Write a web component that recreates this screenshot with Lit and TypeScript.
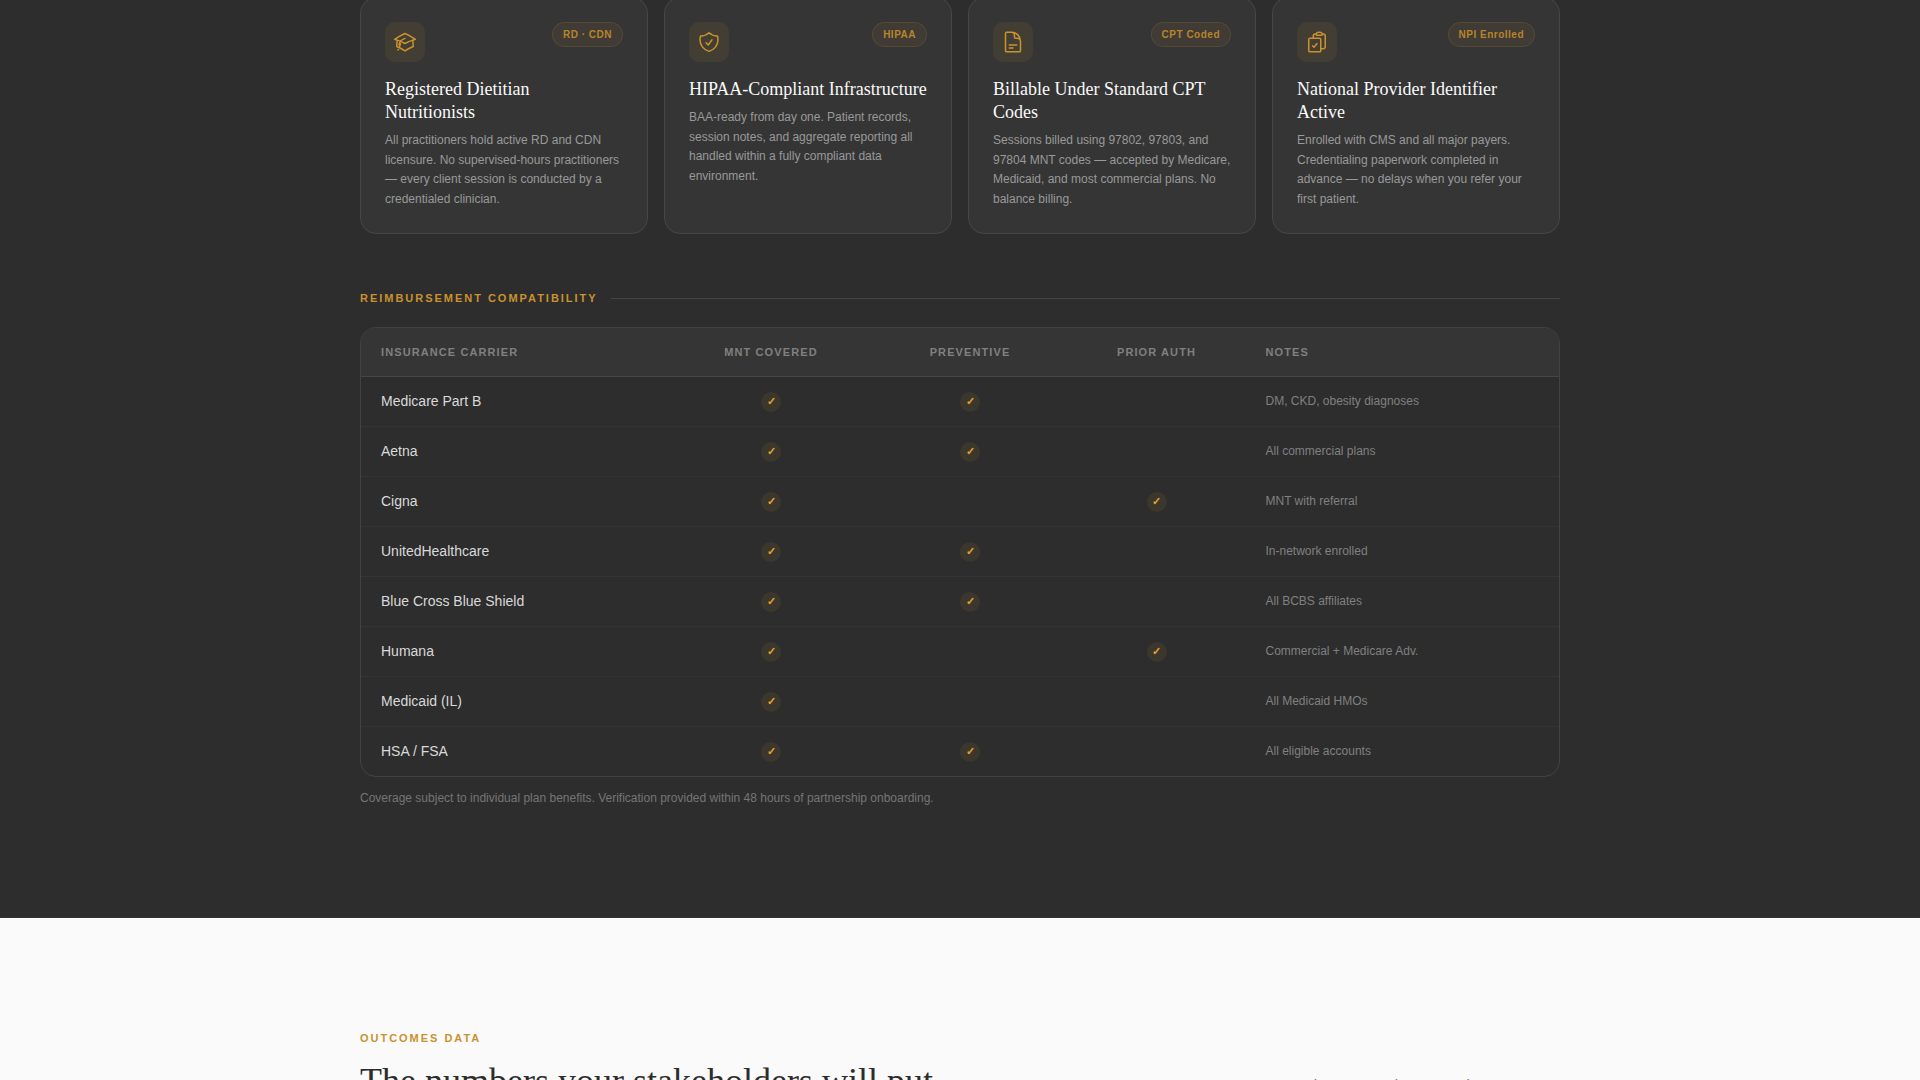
import { LitElement, html, css, svg } from "lit";
import { customElement } from "lit/decorators.js";

const icons: Record<string, unknown> = {
  cap: svg`<path d="M4.26 10.147a60.438 60.438 0 0 0-.491 6.347A48.62 48.62 0 0 1 12 20.904a48.62 48.62 0 0 1 8.232-4.41 60.46 60.46 0 0 0-.491-6.347m-15.482 0a50.636 50.636 0 0 0-2.658-.813A59.906 59.906 0 0 1 12 3.493a59.903 59.903 0 0 1 10.399 5.84c-.896.248-1.783.52-2.658.814m-15.482 0A50.717 50.717 0 0 1 12 13.489a50.702 50.702 0 0 1 7.74-3.342M6.75 15a.75.75 0 1 0 0-1.5.75.75 0 0 0 0 1.5Zm0 0v-3.675A55.378 55.378 0 0 1 12 8.443m-7.007 11.55A5.981 5.981 0 0 0 6.75 15.75v-1.5"/>`,
  shield: svg`<path d="M9 12.75 11.25 15 15 9.75m-3-7.036A11.959 11.959 0 0 1 3.598 6 11.99 11.99 0 0 0 3 9.749c0 5.592 3.824 10.29 9 11.623 5.176-1.332 9-6.03 9-11.622 0-1.31-.21-2.571-.598-3.751h-.152c-3.196 0-6.1-1.248-8.25-3.285Z"/>`,
  doc: svg`<path d="M19.5 14.25v-2.625a3.375 3.375 0 0 0-3.375-3.375h-1.5A1.125 1.125 0 0 1 13.5 7.125v-1.5a3.375 3.375 0 0 0-3.375-3.375H8.25m0 12.75h7.5m-7.5 3H12M10.5 2.25H5.625c-.621 0-1.125.504-1.125 1.125v17.25c0 .621.504 1.125 1.125 1.125h12.75c.621 0 1.125-.504 1.125-1.125V11.25a9 9 0 0 0-9-9Z"/>`,
  clip: svg`<path d="M11.35 3.836c-.065.21-.1.433-.1.664 0 .414.336.75.75.75h4.5a.75.75 0 0 0 .75-.75 2.25 2.25 0 0 0-.1-.664m-5.8 0A2.251 2.251 0 0 1 13.5 2.25H15c1.012 0 1.867.668 2.15 1.586m-5.8 0c-.376.023-.75.05-1.124.08C9.095 4.01 8.25 4.973 8.25 6.108V8.25m8.9-4.414c.376.023.75.05 1.124.08 1.131.094 1.976 1.057 1.976 2.192V16.5A2.25 2.25 0 0 1 18 18.75h-2.25m-7.5-10.5H4.875c-.621 0-1.125.504-1.125 1.125v11.25c0 .621.504 1.125 1.125 1.125h9.75c.621 0 1.125-.504 1.125-1.125V18.75m-7.5-10.5h6.375c.621 0 1.125.504 1.125 1.125v9.375m-8.25-3 1.5 1.5 3-3.75"/>`,
};

const cards = [
  { icon: "cap", badge: "RD · CDN", title: "Registered Dietitian Nutritionists", text: "All practitioners hold active RD and CDN licensure. No supervised-hours practitioners — every client session is conducted by a credentialed clinician." },
  { icon: "shield", badge: "HIPAA", title: "HIPAA-Compliant Infrastructure", text: "BAA-ready from day one. Patient records, session notes, and aggregate reporting all handled within a fully compliant data environment." },
  { icon: "doc", badge: "CPT Coded", title: "Billable Under Standard CPT Codes", text: "Sessions billed using 97802, 97803, and 97804 MNT codes — accepted by Medicare, Medicaid, and most commercial plans. No balance billing." },
  { icon: "clip", badge: "NPI Enrolled", title: "National Provider Identifier Active", text: "Enrolled with CMS and all major payers. Credentialing paperwork completed in advance — no delays when you refer your first patient." },
];

const rows: [string, boolean, boolean, boolean, string][] = [
  ["Medicare Part B", true, true, false, "DM, CKD, obesity diagnoses"],
  ["Aetna", true, true, false, "All commercial plans"],
  ["Cigna", true, false, true, "MNT with referral"],
  ["UnitedHealthcare", true, true, false, "In-network enrolled"],
  ["Blue Cross Blue Shield", true, true, false, "All BCBS affiliates"],
  ["Humana", true, false, true, "Commercial + Medicare Adv."],
  ["Medicaid (IL)", true, false, false, "All Medicaid HMOs"],
  ["HSA / FSA", true, true, false, "All eligible accounts"],
];

@customElement("app-root")
export class AppRoot extends LitElement {
  static styles = css`
    :host { display: block; height: 1080px; overflow: hidden; font-family: "Liberation Sans", Arial, sans-serif; }
    .dark { display: flow-root; background: #2d2d2d; height: 918px; box-sizing: border-box; border-bottom: 1px solid #333; }
    .wrap { width: 1200px; margin: 0 auto; }
    .cards { display: grid; grid-template-columns: repeat(4, 288px); gap: 16px; margin-top: -3px; }
    .card { box-sizing: border-box; height: 237px; padding: 24px; background: #353535; border: 1px solid #464646; border-radius: 16px; }
    .top { display: flex; justify-content: space-between; align-items: flex-start; margin-bottom: 16px; }
    .icon { width: 40px; height: 40px; border-radius: 10px; background: rgba(201,146,46,.1); display: flex; align-items: center; justify-content: center; }
    .icon svg { width: 24px; height: 24px; fill: none; stroke: #c9922e; stroke-width: 1.5; stroke-linecap: round; stroke-linejoin: round; }
    .badge { font-size: 10px; font-weight: 700; letter-spacing: .05em; color: #b8842c; background: rgba(201,146,46,.08); border: 1px solid rgba(201,146,46,.16); border-radius: 20px; padding: 6px 10px; line-height: 11px; }
    h3 { margin: 0 0 7px; font-family: "Liberation Serif", "Times New Roman", serif; font-weight: 400; font-size: 18px; line-height: 23px; color: #fafafa; }
    .card p { margin: 0; font-size: 12px; line-height: 19.6px; color: #999; }
    .section { display: flex; align-items: center; gap: 13px; margin-top: 57px; }
    .label { font-size: 11px; font-weight: 700; letter-spacing: .18em; color: #c9922e; line-height: 14px; white-space: nowrap; }
    .rule { flex: 1; height: 1px; background: #444; }
    .tbl { margin-top: 22px; border: 1px solid #424242; border-radius: 16px; overflow: hidden; }
    table { width: 1198px; table-layout: fixed; border-collapse: collapse; }
    th { height: 48px; box-sizing: border-box; padding: 0 20px; background: #353535; border-bottom: 1px solid #464646; font-size: 11px; font-weight: 700; letter-spacing: .1em; color: #808080; text-align: center; }
    td { height: 50px; box-sizing: border-box; padding: 0 20px; border-bottom: 1px solid #343434; text-align: center; }
    tr:last-child td { border-bottom: 0; }
    th:first-child, td:first-child, th:last-child, td:last-child { text-align: left; }
    .c1 { width: 308.5px; } .c2 { width: 203px; } .c3 { width: 195px; } .c4 { width: 178px; } .c5 { width: 313.5px; }
    .name { font-size: 14px; color: #d9d9d9; }
    .note { font-size: 12px; color: #808080; }
    .check { display: inline-flex; width: 20px; height: 20px; margin-top: 1px; border-radius: 50%; background: rgba(201,146,46,.1); color: #e0a030; font-size: 11px; font-weight: 700; align-items: center; justify-content: center; vertical-align: middle; }
    .foot { margin: 14px 0 0; font-size: 12px; line-height: 15px; color: #757575; }
    .light { background: #fafafa; height: 162px; box-sizing: border-box; padding-top: 113px; overflow: hidden; }
    .cols { display: flex; justify-content: space-between; }
    .eyebrow { font-size: 11px; font-weight: 700; letter-spacing: .18em; color: #c9922e; line-height: 14px; }
    h2 { margin: 14px 0 0; font-family: "Liberation Serif", "Times New Roman", serif; font-weight: 400; font-size: 36px; line-height: 44px; color: #2d2d2d; }
    .lede { width: 272px; margin: 0; padding-top: 42px; font-size: 15px; line-height: 24px; color: #777; }
  `;

  private check(on: boolean) {
    return on ? html`<span class="check">✓</span>` : "";
  }

  render() {
    return html`
      <section class="dark">
        <div class="wrap">
          <div class="cards">
            ${cards.map((c) => html`
              <article class="card">
                <div class="top">
                  <div class="icon"><svg viewBox="0 0 24 24">${icons[c.icon]}</svg></div>
                  <span class="badge">${c.badge}</span>
                </div>
                <h3>${c.title}</h3>
                <p>${c.text}</p>
              </article>`)}
          </div>
          <div class="section"><span class="label">REIMBURSEMENT COMPATIBILITY</span><span class="rule"></span></div>
          <div class="tbl">
            <table>
              <colgroup><col class="c1" /><col class="c2" /><col class="c3" /><col class="c4" /><col class="c5" /></colgroup>
              <thead><tr><th>INSURANCE CARRIER</th><th>MNT COVERED</th><th>PREVENTIVE</th><th>PRIOR AUTH</th><th>NOTES</th></tr></thead>
              <tbody>
                ${rows.map((r) => html`<tr>
                  <td class="name">${r[0]}</td>
                  <td>${this.check(r[1])}</td><td>${this.check(r[2])}</td><td>${this.check(r[3])}</td>
                  <td class="note">${r[4]}</td>
                </tr>`)}
              </tbody>
            </table>
          </div>
          <p class="foot">Coverage subject to individual plan benefits. Verification provided within 48 hours of partnership onboarding.</p>
        </div>
      </section>
      <section class="light">
        <div class="wrap cols">
          <div>
            <div class="eyebrow">OUTCOMES DATA</div>
            <h2>The numbers your stakeholders will put</h2>
          </div>
          <p class="lede">Each program about your data</p>
        </div>
      </section>
    `;
  }
}
